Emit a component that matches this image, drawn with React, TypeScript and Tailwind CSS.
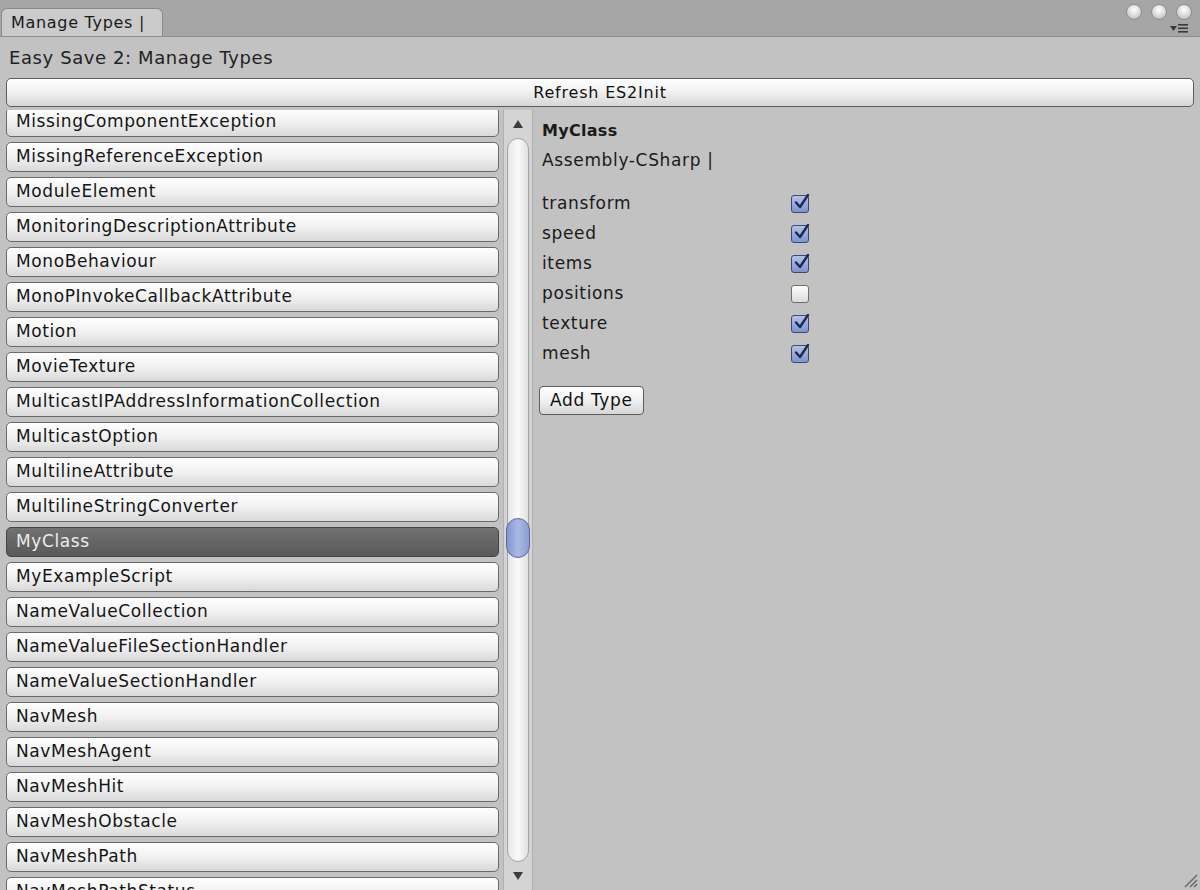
import React from "react";

const items = [
  "MissingComponentException",
  "MissingReferenceException",
  "ModuleElement",
  "MonitoringDescriptionAttribute",
  "MonoBehaviour",
  "MonoPInvokeCallbackAttribute",
  "Motion",
  "MovieTexture",
  "MulticastIPAddressInformationCollection",
  "MulticastOption",
  "MultilineAttribute",
  "MultilineStringConverter",
  "MyClass",
  "MyExampleScript",
  "NameValueCollection",
  "NameValueFileSectionHandler",
  "NameValueSectionHandler",
  "NavMesh",
  "NavMeshAgent",
  "NavMeshHit",
  "NavMeshObstacle",
  "NavMeshPath",
  "NavMeshPathStatus",
];

const fields: [string, boolean][] = [
  ["transform", true],
  ["speed", true],
  ["items", true],
  ["positions", false],
  ["texture", true],
  ["mesh", true],
];

function Check({ on }: { on: boolean }) {
  if (!on)
    return (
      <div className="w-[18px] h-[18px] rounded-[3px] border border-[#6e6e6e] bg-gradient-to-b from-[#fdfdfd] to-[#dcdcdc]" />
    );
  return (
    <div className="relative w-[18px] h-[18px] rounded-[3px] border border-[#3c4a6e] bg-gradient-to-b from-[#b6c3e6] to-[#7e93cf]">
      <svg className="absolute left-[1px] top-[-3px]" width="18" height="18" viewBox="0 0 18 18">
        <path d="M3 9.5 L7 14 L15 2" fill="none" stroke="#1b2a52" strokeWidth="2.4" strokeLinecap="round" strokeLinejoin="round" />
      </svg>
    </div>
  );
}

export default function App() {
  return (
    <div
      className="relative w-[1200px] h-[890px] overflow-hidden bg-[#c2c2c2] flex flex-col text-[#1c1c1c]"
      style={{ fontFamily: '"DejaVu Sans", "Lucida Grande", sans-serif' }}
    >
      {/* title bar */}
      <div className="relative h-[37px] shrink-0 bg-[#a6a6a6] border-b border-[#8c8c8c] flex items-end pl-[1px]">
        <div className="h-[28px] w-[162px] rounded-t-[6px] bg-[#cbcbcb] border border-b-0 border-[#8a8a8a] flex items-center pl-[9px] text-[16px] tracking-[0.7px] text-[#1a1a1a]">
          Manage Types |
        </div>
        <div className="absolute right-[8px] top-[4px] flex gap-[9px]">
          {[0, 1, 2].map((i) => (
            <div
              key={i}
              className="w-[16px] h-[16px] rounded-full border border-[#8e8e8e] bg-[radial-gradient(circle_at_50%_35%,#ffffff_0%,#d8d8d8_55%,#a9a9a9_100%)]"
            />
          ))}
        </div>
        <div className="absolute right-[12px] top-[24px] flex items-center gap-[1px]">
          <svg width="7" height="5" viewBox="0 0 7 5">
            <path d="M0 0 L7 0 L3.5 5 Z" fill="#3a3a3a" />
          </svg>
          <svg width="10" height="9" viewBox="0 0 10 9">
            <rect x="0" y="0" width="10" height="1.6" fill="#3a3a3a" />
            <rect x="0" y="3.5" width="10" height="1.6" fill="#3a3a3a" />
            <rect x="0" y="7" width="10" height="1.6" fill="#3a3a3a" />
          </svg>
        </div>
      </div>

      {/* heading */}
      <div className="h-[41px] shrink-0 flex items-center pl-[9px] text-[18px] tracking-[0.6px] text-[#222]">
        Easy Save 2: Manage Types
      </div>
      <div className="px-[6px] shrink-0">
        <div className="h-[29px] rounded-[5px] border border-[#5e5e5e] bg-gradient-to-b from-[#ffffff] via-[#f0f0f0] to-[#d6d6d6] flex items-center justify-center text-[16px] tracking-[0.8px] text-[#111]">
          Refresh ES2Init
        </div>
      </div>

      <div className="flex flex-1 min-h-0 mt-[3px]">
        {/* list */}
        <div className="w-[503px] shrink-0 overflow-hidden">
          <div className="-mt-[3px] flex flex-col gap-[5px] pl-[6px] pr-[4px]">
            {items.map((t) => {
              const sel = t === "MyClass";
              return (
                <div
                  key={t}
                  className={
                    sel
                      ? "h-[30px] shrink-0 rounded-[5px] border border-[#444] bg-gradient-to-b from-[#727272] to-[#595959] flex items-center pl-[9px] text-[17px] tracking-[0.6px] text-[#ececec]"
                      : "h-[30px] shrink-0 rounded-[5px] border border-[#6a6a6a] bg-gradient-to-b from-[#ffffff] via-[#f1f1f1] to-[#d9d9d9] flex items-center pl-[9px] text-[17px] tracking-[0.6px] text-[#151515]"
                  }
                >
                  {t}
                </div>
              );
            })}
          </div>
        </div>

        {/* scrollbar */}
        <div className="w-[30px] shrink-0 bg-[#d4d4d4] border-l border-r border-[#b0b0b0] flex flex-col items-center">
          <div className="h-[28px] w-full flex items-center justify-center shrink-0">
            <svg width="10" height="8" viewBox="0 0 10 8">
              <path d="M5 0 L10 8 L0 8 Z" fill="#3b3b3b" />
            </svg>
          </div>
          <div className="flex-1 w-[22px] rounded-full border border-[#a4a4a4] bg-gradient-to-r from-[#e6e6e6] via-[#fbfbfb] to-[#e0e0e0] relative">
            <div className="absolute left-[-2px] right-[-2px] top-[379px] h-[40px] rounded-full border border-[#5a6a9a] bg-gradient-to-r from-[#8297cf] via-[#a9b9e4] to-[#8a9dd2]" />
          </div>
          <div className="h-[28px] w-full flex items-center justify-center shrink-0">
            <svg width="10" height="8" viewBox="0 0 10 8">
              <path d="M0 0 L10 0 L5 8 Z" fill="#3b3b3b" />
            </svg>
          </div>
        </div>

        {/* detail */}
        <div className="flex-1 pl-[9px] pt-[6px]">
          <div className="text-[16px] tracking-[0.3px] font-bold h-[30px] flex items-center text-[#1a1a1a]">MyClass</div>
          <div className="text-[17px] tracking-[0.65px] h-[30px] flex items-center text-[#1a1a1a]">Assembly-CSharp |</div>
          <div className="mt-[13px] flex flex-col">
            {fields.map(([n, on]) => (
              <div key={n} className="h-[30px] flex items-center">
                <div className="w-[249px] text-[17px] tracking-[0.65px] text-[#1a1a1a]">{n}</div>
                <Check on={on} />
              </div>
            ))}
          </div>
          <div className="mt-[17px] -ml-[3px] inline-flex h-[29px] px-[10px] items-center rounded-[4px] border border-[#5e5e5e] bg-gradient-to-b from-[#ffffff] via-[#f0f0f0] to-[#d6d6d6] text-[17px] tracking-[0.65px] text-[#111]">
            Add Type
          </div>
        </div>
      </div>

      {/* resize grip */}
      <svg className="absolute left-[1182px] top-[872px]" width="16" height="16" viewBox="0 0 16 16">
        <path d="M15 3 L3 15 M15 8 L8 15 M15 12 L12 15" stroke="#6a6a6a" strokeWidth="1.5" />
      </svg>
    </div>
  );
}
